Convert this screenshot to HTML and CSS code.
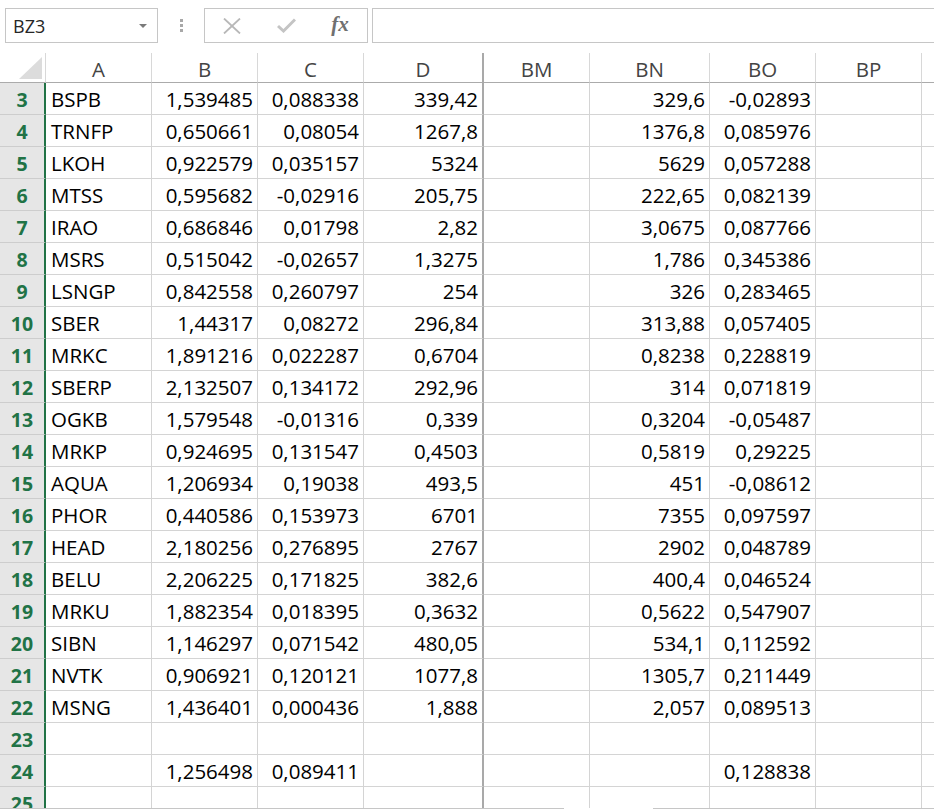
FILE: index.html
```html
<!DOCTYPE html>
<html lang="ru">
<head>
  <meta charset="UTF-8">
  <title>Книга1 - Excel</title>
  <link rel="stylesheet" href="styles.css">
</head>
<body>
  <div class="formula-bar">
    <div class="name-box">
      <span>BZ3</span>
      <span class="drop"></span>
    </div>
    <div class="grip"><i></i><i></i><i></i></div>
    <div class="fx-buttons">
      <span class="fx-btn">
        <svg width="18" height="16" viewBox="0 0 18 16"><path d="M1 0.5 L17 15.5 M17 0.5 L1 15.5" stroke="#b8b8b8" stroke-width="1.8" fill="none"/></svg>
      </span>
      <span class="fx-btn">
        <svg width="19" height="15" viewBox="0 0 19 15"><path d="M1 8 L6.5 13 L18 1.5" stroke="#c4c4c4" stroke-width="3" fill="none"/></svg>
      </span>
      <span class="fx-btn fx">fx</span>
    </div>
    <div class="formula-input"></div>
  </div>

  <div class="sheet">
    <table class="grid">
      <colgroup>
        <col class="c-rh"><col class="c-a"><col class="c-b"><col class="c-c"><col class="c-d">
        <col class="c-bm"><col class="c-bn"><col class="c-bo"><col class="c-bp"><col class="c-bq">
      </colgroup>
      <thead>
        <tr>
          <th class="corner"><span class="tri"></span></th>
          <th>A</th><th>B</th><th>C</th><th class="frz">D</th>
          <th>BM</th><th>BN</th><th>BO</th><th>BP</th><th></th>
        </tr>
      </thead>
      <tbody>
        <tr><th class="rh">3</th><td>BSPB</td><td class="n">1,539485</td><td class="n">0,088338</td><td class="n frz">339,42</td><td></td><td class="n">329,6</td><td class="n">-0,02893</td><td></td><td></td></tr>
        <tr><th class="rh">4</th><td>TRNFP</td><td class="n">0,650661</td><td class="n">0,08054</td><td class="n frz">1267,8</td><td></td><td class="n">1376,8</td><td class="n">0,085976</td><td></td><td></td></tr>
        <tr><th class="rh">5</th><td>LKOH</td><td class="n">0,922579</td><td class="n">0,035157</td><td class="n frz">5324</td><td></td><td class="n">5629</td><td class="n">0,057288</td><td></td><td></td></tr>
        <tr><th class="rh">6</th><td>MTSS</td><td class="n">0,595682</td><td class="n">-0,02916</td><td class="n frz">205,75</td><td></td><td class="n">222,65</td><td class="n">0,082139</td><td></td><td></td></tr>
        <tr><th class="rh">7</th><td>IRAO</td><td class="n">0,686846</td><td class="n">0,01798</td><td class="n frz">2,82</td><td></td><td class="n">3,0675</td><td class="n">0,087766</td><td></td><td></td></tr>
        <tr><th class="rh">8</th><td>MSRS</td><td class="n">0,515042</td><td class="n">-0,02657</td><td class="n frz">1,3275</td><td></td><td class="n">1,786</td><td class="n">0,345386</td><td></td><td></td></tr>
        <tr><th class="rh">9</th><td>LSNGP</td><td class="n">0,842558</td><td class="n">0,260797</td><td class="n frz">254</td><td></td><td class="n">326</td><td class="n">0,283465</td><td></td><td></td></tr>
        <tr><th class="rh">10</th><td>SBER</td><td class="n">1,44317</td><td class="n">0,08272</td><td class="n frz">296,84</td><td></td><td class="n">313,88</td><td class="n">0,057405</td><td></td><td></td></tr>
        <tr><th class="rh">11</th><td>MRKC</td><td class="n">1,891216</td><td class="n">0,022287</td><td class="n frz">0,6704</td><td></td><td class="n">0,8238</td><td class="n">0,228819</td><td></td><td></td></tr>
        <tr><th class="rh">12</th><td>SBERP</td><td class="n">2,132507</td><td class="n">0,134172</td><td class="n frz">292,96</td><td></td><td class="n">314</td><td class="n">0,071819</td><td></td><td></td></tr>
        <tr><th class="rh">13</th><td>OGKB</td><td class="n">1,579548</td><td class="n">-0,01316</td><td class="n frz">0,339</td><td></td><td class="n">0,3204</td><td class="n">-0,05487</td><td></td><td></td></tr>
        <tr><th class="rh">14</th><td>MRKP</td><td class="n">0,924695</td><td class="n">0,131547</td><td class="n frz">0,4503</td><td></td><td class="n">0,5819</td><td class="n">0,29225</td><td></td><td></td></tr>
        <tr><th class="rh">15</th><td>AQUA</td><td class="n">1,206934</td><td class="n">0,19038</td><td class="n frz">493,5</td><td></td><td class="n">451</td><td class="n">-0,08612</td><td></td><td></td></tr>
        <tr><th class="rh">16</th><td>PHOR</td><td class="n">0,440586</td><td class="n">0,153973</td><td class="n frz">6701</td><td></td><td class="n">7355</td><td class="n">0,097597</td><td></td><td></td></tr>
        <tr><th class="rh">17</th><td>HEAD</td><td class="n">2,180256</td><td class="n">0,276895</td><td class="n frz">2767</td><td></td><td class="n">2902</td><td class="n">0,048789</td><td></td><td></td></tr>
        <tr><th class="rh">18</th><td>BELU</td><td class="n">2,206225</td><td class="n">0,171825</td><td class="n frz">382,6</td><td></td><td class="n">400,4</td><td class="n">0,046524</td><td></td><td></td></tr>
        <tr><th class="rh">19</th><td>MRKU</td><td class="n">1,882354</td><td class="n">0,018395</td><td class="n frz">0,3632</td><td></td><td class="n">0,5622</td><td class="n">0,547907</td><td></td><td></td></tr>
        <tr><th class="rh">20</th><td>SIBN</td><td class="n">1,146297</td><td class="n">0,071542</td><td class="n frz">480,05</td><td></td><td class="n">534,1</td><td class="n">0,112592</td><td></td><td></td></tr>
        <tr><th class="rh">21</th><td>NVTK</td><td class="n">0,906921</td><td class="n">0,120121</td><td class="n frz">1077,8</td><td></td><td class="n">1305,7</td><td class="n">0,211449</td><td></td><td></td></tr>
        <tr><th class="rh">22</th><td>MSNG</td><td class="n">1,436401</td><td class="n">0,000436</td><td class="n frz">1,888</td><td></td><td class="n">2,057</td><td class="n">0,089513</td><td></td><td></td></tr>
        <tr><th class="rh">23</th><td></td><td></td><td></td><td class="frz"></td><td></td><td></td><td></td><td></td><td></td></tr>
        <tr><th class="rh">24</th><td></td><td class="n">1,256498</td><td class="n">0,089411</td><td class="frz"></td><td></td><td></td><td class="n">0,128838</td><td></td><td></td></tr>
        <tr><th class="rh">25</th><td></td><td></td><td></td><td class="frz"></td><td></td><td></td><td></td><td></td><td></td></tr>
      </tbody>
    </table>
  </div>
  <div class="hsplit">
    <div class="seg left"></div>
    <div class="seg right"></div>
  </div>
</body>
</html>
```

FILE: styles.css
```css
html, body {
  margin: 0;
  background: #fff;
  overflow: hidden;
}
body {
  width: 934px;
  height: 810px;
  font-family: "Open Sans", "Noto Sans", sans-serif;
}

/* formula bar */
.formula-bar {
  display: flex;
  align-items: flex-start;
  height: 53px;
  box-sizing: border-box;
  padding: 8px 0 0 5px;
}
.name-box {
  width: 153px;
  height: 35px;
  box-sizing: border-box;
  border: 1px solid #c6c6c6;
  display: flex;
  align-items: center;
  justify-content: space-between;
  padding: 0 10px 0 7px;
  font-size: 18px;
  color: #262626;
}
.drop {
  width: 0;
  height: 0;
  border-left: 4px solid transparent;
  border-right: 4px solid transparent;
  border-top: 4px solid #7a7a7a;
  margin-top: 1px;
}
.grip {
  width: 3px;
  margin: 11px 21px 0 22px;
  display: flex;
  flex-direction: column;
  gap: 2px;
}
.grip i {
  display: block;
  width: 3px;
  height: 3px;
  background: #a8a8a8;
}
.fx-buttons {
  width: 164px;
  height: 35px;
  box-sizing: border-box;
  border: 1px solid #c6c6c6;
  display: grid;
  grid-template-columns: repeat(3, 54px);
  align-items: center;
  justify-items: center;
}
.fx-btn {
  display: flex;
  align-items: center;
  justify-content: center;
}
.fx-btn.fx {
  font-family: "Liberation Serif", "DejaVu Serif", serif;
  font-style: italic;
  font-weight: bold;
  font-size: 21px;
  color: #707070;
  margin-top: -2px;
}
.formula-input {
  flex: 1;
  height: 35px;
  box-sizing: border-box;
  margin-left: 4px;
  margin-right: -2px;
  border: 1px solid #c6c6c6;
}

/* grid */
.sheet {
  height: 755px;
  overflow: hidden;
}
.grid {
  table-layout: fixed;
  width: 1028px;
  border-collapse: separate;
  border-spacing: 0;
  font-size: 20.5px;
  color: #000;
}
.c-rh { width: 46px; }
.c-a, .c-b, .c-c, .c-bm, .c-bo, .c-bp, .c-bq { width: 106px; }
.c-d, .c-bn { width: 120px; }

.grid thead tr { height: 30px; }
.grid thead th {
  font-weight: normal;
  color: #444;
  line-height: 25px;
  padding: 4px 0 0;
  text-align: center;
  border-right: 1px solid #d8d8d8;
  border-bottom: 1px solid #ababab;
}
.grid thead th.corner {
  vertical-align: bottom;
  text-align: right;
  padding: 0 3px 3px 0;
  line-height: 0;
}
.tri {
  display: inline-block;
  width: 0;
  height: 0;
  border-left: 23px solid transparent;
  border-bottom: 22px solid #dcdcdc;
}

.grid tbody tr { height: 32px; }
.grid td {
  padding: 2px 4px 0 5px;
  line-height: 29px;
  white-space: nowrap;
  overflow: hidden;
  border-right: 1px solid #d4d4d4;
  border-bottom: 1px solid #d4d4d4;
}
.grid td.n { text-align: right; }
.grid .frz { border-right: 2px solid #a9a9a9; }

.grid th.rh {
  background: #e6e6e6;
  color: #217346;
  font-weight: bold;
  font-size: 19.5px;
  line-height: 29px;
  padding: 2px 0 0;
  text-align: center;
  border-right: 2px solid #217346;
  border-bottom: 1px solid #cdcdcd;
}

/* bottom edge of the sheet */
.hsplit {
  display: flex;
  height: 1px;
}
.seg {
  height: 1px;
  background: #c6c6c6;
}
.seg.left { width: 564px; }
.seg.right { flex: 1; margin-left: 89px; }
```
